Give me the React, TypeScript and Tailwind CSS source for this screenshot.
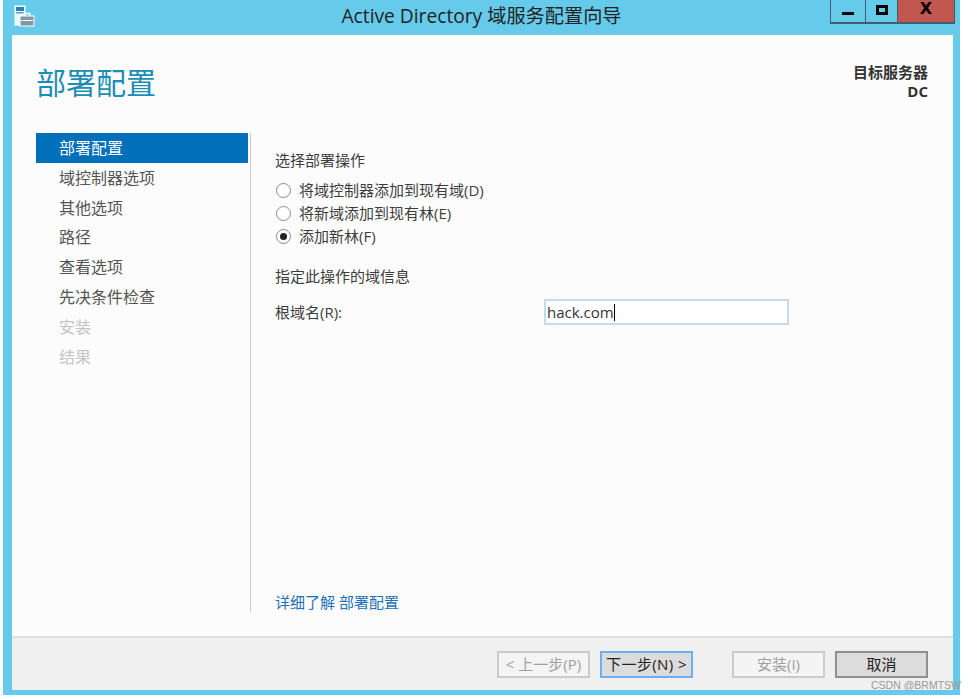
const nav = [
  { t: "部署配置", s: 1 },
  { t: "域控制器选项" },
  { t: "其他选项" },
  { t: "路径" },
  { t: "查看选项" },
  { t: "先决条件检查" },
  { t: "安装", d: 1 },
  { t: "结果", d: 1 },
];
const radios = [
  { t: "将域控制器添加到现有域(D)" },
  { t: "将新域添加到现有林(E)" },
  { t: "添加新林(F)", c: 1 },
];

function AppIcon() {
  return (
    <svg width="21" height="22" viewBox="0 0 21 22" className="block">
      <rect x="1" y="1" width="10" height="19" fill="#eaf6fb" stroke="#ffffff" />
      <rect x="2" y="2" width="8" height="4" fill="#2c7fb8" />
      <rect x="2" y="7" width="8" height="1.5" fill="#5b9fc9" />
      <rect x="6" y="11" width="14" height="10" fill="#8296a6" stroke="#ffffff" />
      <path d="M10 11V8.5h6V11" fill="none" stroke="#ffffff" strokeWidth="1.3" />
      <rect x="7" y="15" width="12" height="1" fill="#ffffff" />
    </svg>
  );
}

function Radio({ checked }: { checked?: boolean }) {
  return (
    <span className="ml-[1px] w-[15px] h-[15px] rounded-full border border-[#8a8a8a] bg-white flex items-center justify-center shrink-0">
      {checked ? <span className="w-[7px] h-[7px] rounded-full bg-[#222222]" /> : null}
    </span>
  );
}

function Button({ label, cls }: { label: string; cls: string }) {
  return (
    <div className={"w-[93px] h-[27px] flex items-center justify-center text-[15px] border-2 " + cls}>{label}</div>
  );
}

export default function App() {
  return (
    <div className="relative w-[977px] h-[699px] bg-white overflow-hidden text-[#3c3c3c] font-['Open_Sans','Noto_Sans_CJK_SC',sans-serif]">
      <div className="ml-[3px] w-[957px] h-[695px] bg-[#66cbeb] flex flex-col pb-[5px]">
        <div className="h-[35px] flex shrink-0 relative">
          <div className="pl-[11px] pt-[5px] w-[130px]">
            <AppIcon />
          </div>
          <div className="flex-1 text-center text-[19.2px] leading-[32px] text-[#222222] whitespace-nowrap">Active Directory 域服务配置向导</div>
          <div className="flex h-[24px] mr-[5px] border-b-2 border-[#3f5f70]">
            <div className="w-[35px] border-l border-[#3f5f70] flex items-center justify-center">
              <span className="w-[12px] h-[3px] bg-black mt-[5px]" />
            </div>
            <div className="w-[32px] border-l border-[#3f5f70] flex items-center justify-center">
              <span className="w-[12px] h-[10px] border-[3px] border-black mb-[2px]" />
            </div>
            <div className="w-[58px] bg-[#c2574f] border-l border-r border-[#3f5f70] flex items-center justify-center text-black font-bold text-[16px] leading-none pb-[4px] font-['DejaVu_Sans',sans-serif]">
              X
            </div>
          </div>
        </div>
        <div className="ml-[9px] mr-[7px] flex-1 bg-[#fcfcfc] flex flex-col min-h-0">
          <div className="flex justify-between h-[98px] pl-[24px] pr-[25px] shrink-0">
            <div className="text-[30px] leading-[40px] pt-[28px] text-[#1c8db5]">部署配置</div>
            <div className="text-right text-[15px] font-semibold leading-[19px] pt-[28px] text-[#333333]">
              <div>目标服务器</div>
              <div className="font-bold">DC</div>
            </div>
          </div>
          <div className="flex h-[479px] shrink-0">
            <div className="w-[215px] ml-[24px] shrink-0 border-r border-[#c8c8c8]">
              <div className="w-[212px] text-[16px]">
                {nav.map((n) => (
                  <div
                    key={n.t}
                    className={
                      "h-[29.8px] leading-[31.4px] pl-[23px] " +
                      (n.s ? "bg-[#0070bb] text-white" : n.d ? "text-[#c4c4c4]" : "text-[#555555]")
                    }
                  >
                    {n.t}
                  </div>
                ))}
              </div>
            </div>
            <div className="flex-1 pl-[24px] text-[15px] flex flex-col">
              <div className="leading-[20px] mt-[17px]">选择部署操作</div>
              <div className="mt-[10px] flex flex-col gap-[3px]">
                {radios.map((r) => (
                  <div key={r.t} className="h-[20px] flex items-center gap-[8px]">
                    <Radio checked={!!r.c} />
                    <span>{r.t}</span>
                  </div>
                ))}
              </div>
              <div className="leading-[20px] mt-[20px]">指定此操作的域信息</div>
              <div className="flex items-center mt-[13px]">
                <div className="w-[269px]">根域名(R):</div>
                <div className="w-[245px] h-[26px] border-2 border-[#c5dcf0] bg-white pl-[1px] flex items-center text-[#333333]">
                  <span className="pt-[1px]">hack.com</span>
                  <span className="w-px h-[17px] bg-black" />
                </div>
              </div>
              <div className="mt-auto leading-[20px] text-[#1c70b8]">详细了解 部署配置</div>
            </div>
          </div>
          <div className="flex-1 mt-[24px] bg-[#f0f0f0] border-t-2 border-[#dfdfdf] flex items-start pl-[485px] pt-[13px]">
            <Button label="< 上一步(P)" cls="border-[#c8cccc] bg-[#f4f4f4] text-[#a0a0a0]" />
            <div className="w-[10px]" />
            <Button label="下一步(N) >" cls="border-[#6cb0f2] bg-[#dcdcdc] text-[#222222] tracking-[0.4px]" />
            <div className="w-[39px]" />
            <Button label="安装(I)" cls="border-[#c8cccc] bg-[#f4f4f4] text-[#a0a0a0]" />
            <div className="w-[10px]" />
            <Button label="取消" cls="border-[#8f8f8f] bg-[#dcdcdc] text-[#222222]" />
          </div>
        </div>
      </div>
      <div className="absolute left-[871px] top-[678px] text-[10.5px] leading-[15px] text-[#999999] font-['Liberation_Sans',sans-serif]">
        CSDN @BRMTSW
      </div>
    </div>
  );
}
